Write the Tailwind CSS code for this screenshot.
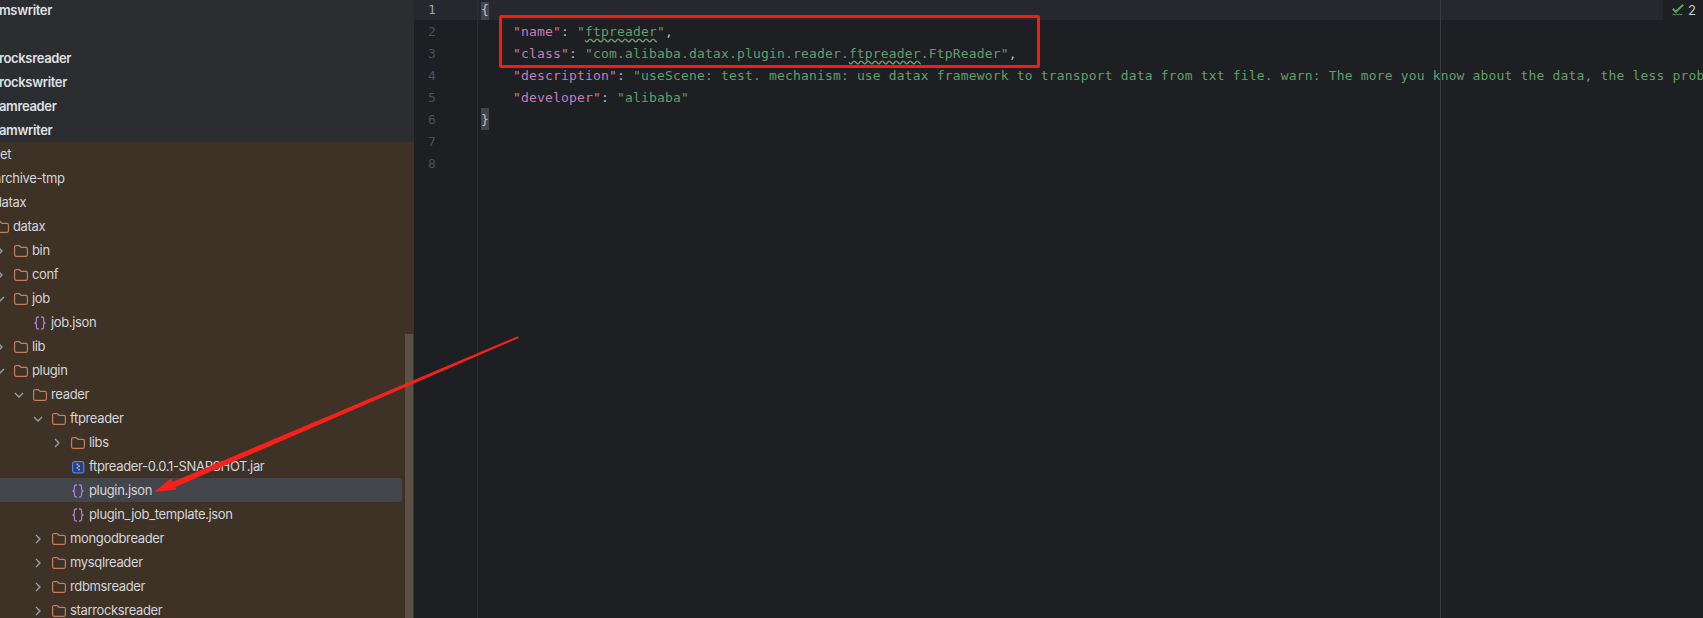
<!DOCTYPE html>
<html>
<head>
<meta charset="utf-8">
<script src="https://cdn.jsdelivr.net/npm/@tailwindcss/browser@4"></script>
</head>
<body class="bg-[#1e1f22]">
<div class="relative flex h-[618px] w-[1703px] overflow-hidden bg-[#1e1f22]">
  <!-- Project tree -->
  <aside class="relative h-full w-[414px] shrink-0 overflow-hidden bg-[#3e3125] font-['Inter','Liberation_Sans',sans-serif] text-[13px] tracking-[-0.35px] text-[#d3d6dc]">
    <div class="h-[142px] overflow-hidden bg-[#2b2d30] font-semibold tracking-[-0.35px] text-[#dfe1e5] [&>div]:pt-[2px]">
      <div class="-mt-[2px] flex h-6 items-center -ml-px">mswriter</div>
      <div class="h-6"></div>
      <div class="flex h-6 items-center -ml-px">rocksreader</div>
      <div class="flex h-6 items-center -ml-px">rockswriter</div>
      <div class="flex h-6 items-center -ml-px">amreader</div>
      <div class="flex h-6 items-center -ml-px">amwriter</div>
    </div>
    <div class="w-[402px] [&>div]:pt-[2px]">
      <div class="flex h-6 items-center">et</div>
      <div class="flex h-6 items-center -ml-[6px]">archive-tmp</div>
      <div class="flex h-6 items-center -ml-[6px]">datax</div>
      <div class="flex h-6 items-center -ml-[24px]"><span class="w-[19px]"></span><svg class="h-3 w-[14px]" viewBox="0 0 14 12" fill="none" stroke="#c57f58" stroke-width="1.2"><path d="M.6 2.1A1.5 1.5 0 0 1 2.1.6h3.2l1.7 1.8h4.9a1.5 1.5 0 0 1 1.5 1.5v5.9a1.5 1.5 0 0 1-1.5 1.5H2.1a1.5 1.5 0 0 1-1.5-1.5z"/></svg><span class="ml-1">datax</span></div>
      <div class="flex h-6 items-center -ml-[5px]"><span class="w-[19px]"><svg class="h-2.5 w-2.5" viewBox="0 0 10 10" fill="none" stroke="#9da0a8" stroke-width="1.3"><path d="M3 1l4 4-4 4"/></svg></span><svg class="h-3 w-[14px]" viewBox="0 0 14 12" fill="none" stroke="#c57f58" stroke-width="1.2"><path d="M.6 2.1A1.5 1.5 0 0 1 2.1.6h3.2l1.7 1.8h4.9a1.5 1.5 0 0 1 1.5 1.5v5.9a1.5 1.5 0 0 1-1.5 1.5H2.1a1.5 1.5 0 0 1-1.5-1.5z"/></svg><span class="ml-1">bin</span></div>
      <div class="flex h-6 items-center -ml-[5px]"><span class="w-[19px]"><svg class="h-2.5 w-2.5" viewBox="0 0 10 10" fill="none" stroke="#9da0a8" stroke-width="1.3"><path d="M3 1l4 4-4 4"/></svg></span><svg class="h-3 w-[14px]" viewBox="0 0 14 12" fill="none" stroke="#c57f58" stroke-width="1.2"><path d="M.6 2.1A1.5 1.5 0 0 1 2.1.6h3.2l1.7 1.8h4.9a1.5 1.5 0 0 1 1.5 1.5v5.9a1.5 1.5 0 0 1-1.5 1.5H2.1a1.5 1.5 0 0 1-1.5-1.5z"/></svg><span class="ml-1">conf</span></div>
      <div class="flex h-6 items-center -ml-[5px]"><span class="w-[19px]"><svg class="h-2.5 w-2.5" viewBox="0 0 10 10" fill="none" stroke="#9da0a8" stroke-width="1.3"><path d="M1 3l4 4 4-4"/></svg></span><svg class="h-3 w-[14px]" viewBox="0 0 14 12" fill="none" stroke="#c57f58" stroke-width="1.2"><path d="M.6 2.1A1.5 1.5 0 0 1 2.1.6h3.2l1.7 1.8h4.9a1.5 1.5 0 0 1 1.5 1.5v5.9a1.5 1.5 0 0 1-1.5 1.5H2.1a1.5 1.5 0 0 1-1.5-1.5z"/></svg><span class="ml-1">job</span></div>
      <div class="flex h-6 items-center pl-[33px]"><svg class="h-[14px] w-[14px]" viewBox="0 0 14 14" fill="none" stroke="#a57fd6" stroke-width="1.3"><path d="M6 1H5C3.9 1 3.4 1.7 3.4 2.8V5c0 1-.6 2-1.9 2 1.3 0 1.9 1 1.9 2v2.2c0 1.1.5 1.8 1.6 1.8h1M8 1h1c1.1 0 1.6.7 1.6 1.8V5c0 1 .6 2 1.9 2-1.3 0-1.9 1-1.9 2v2.2c0 1.1-.5 1.8-1.6 1.8H8"/></svg><span class="ml-1">job.json</span></div>
      <div class="flex h-6 items-center -ml-[5px]"><span class="w-[19px]"><svg class="h-2.5 w-2.5" viewBox="0 0 10 10" fill="none" stroke="#9da0a8" stroke-width="1.3"><path d="M3 1l4 4-4 4"/></svg></span><svg class="h-3 w-[14px]" viewBox="0 0 14 12" fill="none" stroke="#c57f58" stroke-width="1.2"><path d="M.6 2.1A1.5 1.5 0 0 1 2.1.6h3.2l1.7 1.8h4.9a1.5 1.5 0 0 1 1.5 1.5v5.9a1.5 1.5 0 0 1-1.5 1.5H2.1a1.5 1.5 0 0 1-1.5-1.5z"/></svg><span class="ml-1">lib</span></div>
      <div class="flex h-6 items-center -ml-[5px]"><span class="w-[19px]"><svg class="h-2.5 w-2.5" viewBox="0 0 10 10" fill="none" stroke="#9da0a8" stroke-width="1.3"><path d="M1 3l4 4 4-4"/></svg></span><svg class="h-3 w-[14px]" viewBox="0 0 14 12" fill="none" stroke="#c57f58" stroke-width="1.2"><path d="M.6 2.1A1.5 1.5 0 0 1 2.1.6h3.2l1.7 1.8h4.9a1.5 1.5 0 0 1 1.5 1.5v5.9a1.5 1.5 0 0 1-1.5 1.5H2.1a1.5 1.5 0 0 1-1.5-1.5z"/></svg><span class="ml-1">plugin</span></div>
      <div class="flex h-6 items-center pl-[14px]"><span class="w-[19px]"><svg class="h-2.5 w-2.5" viewBox="0 0 10 10" fill="none" stroke="#9da0a8" stroke-width="1.3"><path d="M1 3l4 4 4-4"/></svg></span><svg class="h-3 w-[14px]" viewBox="0 0 14 12" fill="none" stroke="#c57f58" stroke-width="1.2"><path d="M.6 2.1A1.5 1.5 0 0 1 2.1.6h3.2l1.7 1.8h4.9a1.5 1.5 0 0 1 1.5 1.5v5.9a1.5 1.5 0 0 1-1.5 1.5H2.1a1.5 1.5 0 0 1-1.5-1.5z"/></svg><span class="ml-1">reader</span></div>
      <div class="flex h-6 items-center pl-[33px]"><span class="w-[19px]"><svg class="h-2.5 w-2.5" viewBox="0 0 10 10" fill="none" stroke="#9da0a8" stroke-width="1.3"><path d="M1 3l4 4 4-4"/></svg></span><svg class="h-3 w-[14px]" viewBox="0 0 14 12" fill="none" stroke="#c57f58" stroke-width="1.2"><path d="M.6 2.1A1.5 1.5 0 0 1 2.1.6h3.2l1.7 1.8h4.9a1.5 1.5 0 0 1 1.5 1.5v5.9a1.5 1.5 0 0 1-1.5 1.5H2.1a1.5 1.5 0 0 1-1.5-1.5z"/></svg><span class="ml-1">ftpreader</span></div>
      <div class="flex h-6 items-center pl-[52px]"><span class="w-[19px]"><svg class="h-2.5 w-2.5" viewBox="0 0 10 10" fill="none" stroke="#9da0a8" stroke-width="1.3"><path d="M3 1l4 4-4 4"/></svg></span><svg class="h-3 w-[14px]" viewBox="0 0 14 12" fill="none" stroke="#c57f58" stroke-width="1.2"><path d="M.6 2.1A1.5 1.5 0 0 1 2.1.6h3.2l1.7 1.8h4.9a1.5 1.5 0 0 1 1.5 1.5v5.9a1.5 1.5 0 0 1-1.5 1.5H2.1a1.5 1.5 0 0 1-1.5-1.5z"/></svg><span class="ml-1">libs</span></div>
      <div class="flex h-6 items-center pl-[71px]"><svg class="h-[14px] w-[14px]" viewBox="0 0 14 14"><rect x="1.6" y="1.6" width="11.2" height="11.2" rx="2" fill="#2b3f70" stroke="#4d82e6" stroke-width="1.2"/><path d="M5.5 3.6h1.7v1.7H5.5zM7.2 5.3h1.7V7H7.2zM5.5 7h1.7v1.7H5.5zM7.2 8.7h1.7v1.7H7.2z" fill="#8fb3f5"/></svg><span class="ml-1">ftpreader-0.0.1-SNAPSHOT.jar</span></div>
      <div class="flex h-6 items-center rounded-r bg-[#43454a] pl-[71px]"><svg class="h-[14px] w-[14px]" viewBox="0 0 14 14" fill="none" stroke="#a57fd6" stroke-width="1.3"><path d="M6 1H5C3.9 1 3.4 1.7 3.4 2.8V5c0 1-.6 2-1.9 2 1.3 0 1.9 1 1.9 2v2.2c0 1.1.5 1.8 1.6 1.8h1M8 1h1c1.1 0 1.6.7 1.6 1.8V5c0 1 .6 2 1.9 2-1.3 0-1.9 1-1.9 2v2.2c0 1.1-.5 1.8-1.6 1.8H8"/></svg><span class="ml-1">plugin.json</span></div>
      <div class="flex h-6 items-center pl-[71px]"><svg class="h-[14px] w-[14px]" viewBox="0 0 14 14" fill="none" stroke="#a57fd6" stroke-width="1.3"><path d="M6 1H5C3.9 1 3.4 1.7 3.4 2.8V5c0 1-.6 2-1.9 2 1.3 0 1.9 1 1.9 2v2.2c0 1.1.5 1.8 1.6 1.8h1M8 1h1c1.1 0 1.6.7 1.6 1.8V5c0 1 .6 2 1.9 2-1.3 0-1.9 1-1.9 2v2.2c0 1.1-.5 1.8-1.6 1.8H8"/></svg><span class="ml-1">plugin_job_template.json</span></div>
      <div class="flex h-6 items-center pl-[33px]"><span class="w-[19px]"><svg class="h-2.5 w-2.5" viewBox="0 0 10 10" fill="none" stroke="#9da0a8" stroke-width="1.3"><path d="M3 1l4 4-4 4"/></svg></span><svg class="h-3 w-[14px]" viewBox="0 0 14 12" fill="none" stroke="#c57f58" stroke-width="1.2"><path d="M.6 2.1A1.5 1.5 0 0 1 2.1.6h3.2l1.7 1.8h4.9a1.5 1.5 0 0 1 1.5 1.5v5.9a1.5 1.5 0 0 1-1.5 1.5H2.1a1.5 1.5 0 0 1-1.5-1.5z"/></svg><span class="ml-1">mongodbreader</span></div>
      <div class="flex h-6 items-center pl-[33px]"><span class="w-[19px]"><svg class="h-2.5 w-2.5" viewBox="0 0 10 10" fill="none" stroke="#9da0a8" stroke-width="1.3"><path d="M3 1l4 4-4 4"/></svg></span><svg class="h-3 w-[14px]" viewBox="0 0 14 12" fill="none" stroke="#c57f58" stroke-width="1.2"><path d="M.6 2.1A1.5 1.5 0 0 1 2.1.6h3.2l1.7 1.8h4.9a1.5 1.5 0 0 1 1.5 1.5v5.9a1.5 1.5 0 0 1-1.5 1.5H2.1a1.5 1.5 0 0 1-1.5-1.5z"/></svg><span class="ml-1">mysqlreader</span></div>
      <div class="flex h-6 items-center pl-[33px]"><span class="w-[19px]"><svg class="h-2.5 w-2.5" viewBox="0 0 10 10" fill="none" stroke="#9da0a8" stroke-width="1.3"><path d="M3 1l4 4-4 4"/></svg></span><svg class="h-3 w-[14px]" viewBox="0 0 14 12" fill="none" stroke="#c57f58" stroke-width="1.2"><path d="M.6 2.1A1.5 1.5 0 0 1 2.1.6h3.2l1.7 1.8h4.9a1.5 1.5 0 0 1 1.5 1.5v5.9a1.5 1.5 0 0 1-1.5 1.5H2.1a1.5 1.5 0 0 1-1.5-1.5z"/></svg><span class="ml-1">rdbmsreader</span></div>
      <div class="flex h-6 items-center pl-[33px]"><span class="w-[19px]"><svg class="h-2.5 w-2.5" viewBox="0 0 10 10" fill="none" stroke="#9da0a8" stroke-width="1.3"><path d="M3 1l4 4-4 4"/></svg></span><svg class="h-3 w-[14px]" viewBox="0 0 14 12" fill="none" stroke="#c57f58" stroke-width="1.2"><path d="M.6 2.1A1.5 1.5 0 0 1 2.1.6h3.2l1.7 1.8h4.9a1.5 1.5 0 0 1 1.5 1.5v5.9a1.5 1.5 0 0 1-1.5 1.5H2.1a1.5 1.5 0 0 1-1.5-1.5z"/></svg><span class="ml-1">starrocksreader</span></div>
    </div>
    <div class="absolute bottom-0 left-[405px] top-[334px] w-2 bg-[#5a5044]"></div>
  </aside>

  <!-- Editor -->
  <main class="relative flex h-full min-w-0 flex-1 flex-col overflow-hidden font-['DejaVu_Sans_Mono','Liberation_Mono',monospace] text-[13px] leading-[24px] tracking-[0.17px] whitespace-pre text-[#bcbec4]">
    <div class="-mt-[2px] flex h-[22px] shrink-0 bg-[#26282e]">
      <div class="w-16 shrink-0 border-r border-[#2b2d30] pl-[14px] text-[#a1a3ab]">1</div>
      <div class="flex items-end pl-[3px]"><span class="h-[18px] bg-[#43454a] leading-[16px]">{</span></div>
    </div>
    <div class="flex h-[22px] shrink-0">
      <div class="w-16 shrink-0 border-r border-[#2b2d30] pl-[14px] text-[#4b5059]">2</div>
      <div class="pl-[3px]">    <span class="text-[#c77dbb]">"name"</span>: <span class="text-[#5f9f69]">"<span class="underline decoration-[#6f9c74] decoration-wavy underline-offset-2">ftpreader</span>"</span>,</div>
    </div>
    <div class="flex h-[22px] shrink-0">
      <div class="w-16 shrink-0 border-r border-[#2b2d30] pl-[14px] text-[#4b5059]">3</div>
      <div class="pl-[3px]">    <span class="text-[#c77dbb]">"class"</span>: <span class="text-[#5f9f69]">"com.alibaba.datax.plugin.reader.<span class="underline decoration-[#6f9c74] decoration-wavy underline-offset-2">ftpreader</span>.FtpReader"</span>,</div>
    </div>
    <div class="flex h-[22px] shrink-0">
      <div class="w-16 shrink-0 border-r border-[#2b2d30] pl-[14px] text-[#4b5059]">4</div>
      <div class="pl-[3px]">    <span class="text-[#c77dbb]">"description"</span>: <span class="text-[#5f9f69]">"useScene: test. mechanism: use datax framework to transport data from txt file. warn: The more you know about the data, the less prob</span></div>
    </div>
    <div class="flex h-[22px] shrink-0">
      <div class="w-16 shrink-0 border-r border-[#2b2d30] pl-[14px] text-[#4b5059]">5</div>
      <div class="pl-[3px]">    <span class="text-[#c77dbb]">"developer"</span>: <span class="text-[#5f9f69]">"alibaba"</span></div>
    </div>
    <div class="flex h-[22px] shrink-0">
      <div class="w-16 shrink-0 border-r border-[#2b2d30] pl-[14px] text-[#4b5059]">6</div>
      <div class="flex pl-[3px]"><span class="h-[22px] bg-[#43454a]">}</span></div>
    </div>
    <div class="flex h-[22px] shrink-0">
      <div class="w-16 shrink-0 border-r border-[#2b2d30] pl-[14px] text-[#4b5059]">7</div>
    </div>
    <div class="flex h-[22px] shrink-0">
      <div class="w-16 shrink-0 border-r border-[#2b2d30] pl-[14px] text-[#4b5059]">8</div>
    </div>
    <div class="flex flex-1"><div class="w-16 shrink-0 border-r border-[#2b2d30]"></div></div>

    <!-- Right margin guide -->
    <div class="absolute bottom-0 left-[1026px] top-0 w-px bg-[#393b40]"></div>
    <!-- Inspection widget -->
    <div class="absolute right-0 top-0 flex h-5 w-10 items-center gap-1 bg-[#1e1f22] pl-[9px] font-['Inter','Liberation_Sans',sans-serif] text-[13px] leading-none tracking-normal text-[#c9ccd2]"><svg class="h-3 w-3" viewBox="0 0 12 12" fill="none" stroke="#55a15f"><path d="M.8 4.8l3 3L11.2.8" stroke-width="2"/><path d="M.5 11l1.4-1 1.4 1 1.4-1 1.4 1 1.4-1 1.4 1 1.4-1" stroke-width="1"/></svg><span>2</span></div>
  </main>

  <!-- Annotations drawn over the screenshot -->
  <div class="absolute left-[499px] top-[15px] h-[53px] w-[541px] rounded-[2px] border-[3px] border-[#fa1a12]"></div>
  <svg class="absolute left-0 top-0 h-[618px] w-[1703px]" viewBox="0 0 1703 618" fill="none">
    <path d="M518 336.2L518.8 338L172 488.5L170 483z" fill="#f5211a"/>
    <path d="M154 492L171 478.5L176.500 489.500z" fill="#f5211a"/>
  </svg>
</div>
</body>
</html>
